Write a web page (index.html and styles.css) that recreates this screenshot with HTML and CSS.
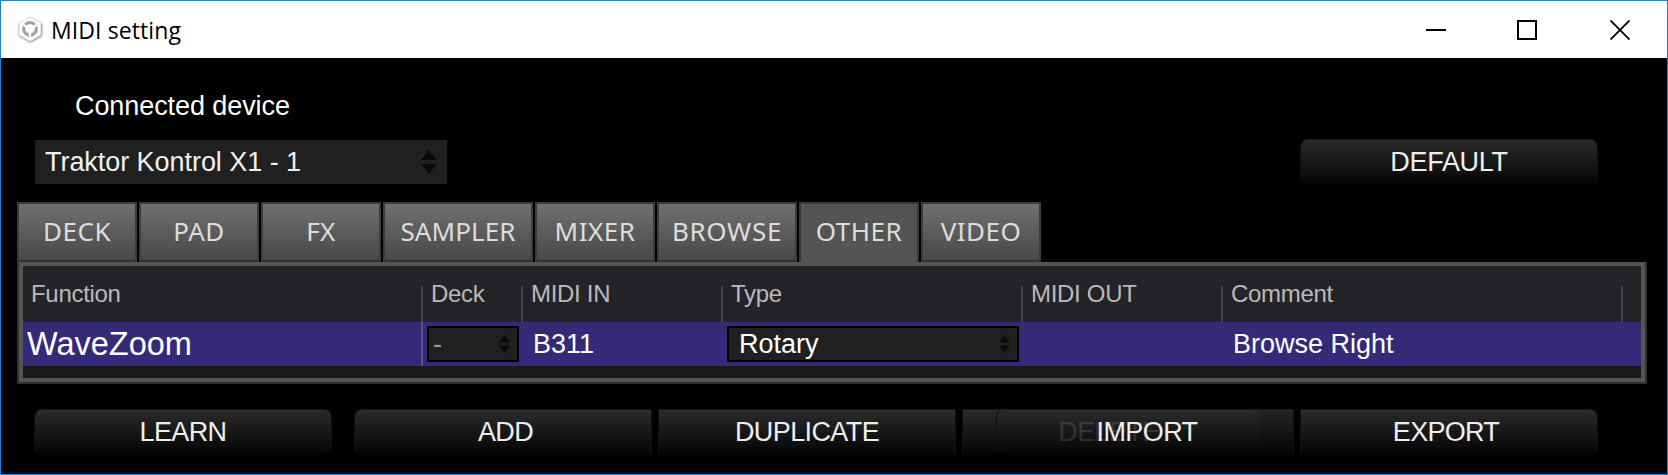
FILE: index.html
```html
<!DOCTYPE html>
<html lang="en">
<head>
<meta charset="utf-8">
<title>MIDI setting</title>
<link rel="stylesheet" href="styles.css">
</head>
<body>
<div class="window">
  <header class="titlebar">
    <svg class="app-icon" width="30" height="32" viewBox="0 0 30 32">
      <defs><filter id="soft" x="-20%" y="-20%" width="140%" height="140%"><feGaussianBlur stdDeviation="1"/></filter></defs>
      <path d="M15.500 4.500 26 10.500v11l-10.500 6L5 21.500v-11z" fill="#888" stroke="#888" stroke-width="2" stroke-linejoin="round" filter="url(#soft)"/>
      <path d="M15 3 25.500 9v12L15 27 4.500 21V9z" fill="#fff" stroke="#e6e6e6" stroke-width="1" stroke-linejoin="round"/>
      <circle cx="15" cy="15" r="6.500" fill="#ddd" stroke="#a2a2a2" stroke-width="2.800"/>
      <path d="M15 15v7.500M15 15 8.500 11M15 15l6.500-4" stroke="#fff" stroke-width="2.400"/>
      <circle cx="15" cy="14.500" r="4" fill="#fff"/>
    </svg>
    <h1 class="title">MIDI setting</h1>
    <div class="controls">
      <svg width="20" height="20" viewBox="0 0 20 20"><path d="M0 10h20" stroke="#000" stroke-width="2"/></svg>
      <svg width="20" height="20" viewBox="0 0 20 20"><path d="M1 1h18v18H1z" fill="none" stroke="#000" stroke-width="2"/></svg>
      <svg class="close" width="20" height="20" viewBox="0 0 20 20"><path d="M.500.500l19 19M19.500.500l-19 19" stroke="#000" stroke-width="1.800"/></svg>
    </div>
  </header>

  <main class="content">
    <div class="device-label">Connected device</div>
    <div class="device-row">
      <div class="select device"><span>Traktor Kontrol X1 - 1</span>
        <svg width="16" height="24" viewBox="0 0 16 24"><path d="M0 10 8 0l8 10zM0 14h16L8 24z"/></svg></div>
      <button class="btn round-left round-right default">DEFAULT</button>
    </div>

    <nav class="tabs">
      <div class="tab">DECK</div>
      <div class="tab">PAD</div>
      <div class="tab">FX</div>
      <div class="tab sampler">SAMPLER</div>
      <div class="tab">MIXER</div>
      <div class="tab browse">BROWSE</div>
      <div class="tab active">OTHER</div>
      <div class="tab">VIDEO</div>
    </nav>

    <section class="panel">
      <div class="grid head">
        <div>Function</div><div>Deck</div><div>MIDI IN</div><div>Type</div><div>MIDI OUT</div><div>Comment</div>
      </div>
      <div class="grid row">
        <div class="name">WaveZoom</div>
        <div class="cell-select"><div class="select small deck"><span>-</span>
          <svg width="11" height="18" viewBox="0 0 11 18"><path d="M0 7.500 5.500 0 11 7.500zM0 10.500h11L5.500 18z"/></svg></div></div>
        <div class="value">B311</div>
        <div class="cell-select"><div class="select small"><span>Rotary</span>
          <svg width="11" height="18" viewBox="0 0 11 18"><path d="M0 7.500 5.500 0 11 7.500zM0 10.500h11L5.500 18z"/></svg></div></div>
        <div></div>
        <div class="value">Browse Right</div>
      </div>
    </section>

    <footer class="actions">
      <button class="btn round-left round-right learn">LEARN</button>
      <button class="btn round-left add">ADD</button>
      <button class="btn">DUPLICATE</button>
      <button class="btn round-right delete">DELETE</button>
      <button class="btn round-left import">IMPORT</button>
      <button class="btn round-right export">EXPORT</button>
    </footer>
  </main>
</div>
</body>
</html>
```
FILE: styles.css
```css
* { box-sizing: border-box; }
body { margin: 0; background: #000; font-family: "Liberation Sans", Arial, sans-serif; }
.window { width: 1668px; height: 475px; border: 1px solid #1a7fd4; background: #000; overflow: hidden; }
.titlebar { display: flex; align-items: center; height: 57px; padding: 0 37px 0 14px; background: #fff; }
.app-icon { flex: none; }
.title { margin: 0 auto 0 6px; padding-top: 2px; font: 400 23px/57px "Open Sans", "Noto Sans", sans-serif; color: #000; letter-spacing: .1px; }
.controls { display: flex; gap: 71px; }
.controls svg { display: block; }
.controls .close { margin-left: 2px; }
.content { padding: 31px 20px 0 16px; }
.device-label { padding-left: 58px; height: 51px; font-size: 27px; line-height: 34px; letter-spacing: -.08px; color: #fff; }
.device-row { display: flex; justify-content: space-between; align-items: flex-start; height: 63px; padding: 0 49px 0 18px; margin-top: -1px; }

.select { display: flex; align-items: center; justify-content: space-between; background: #202020; color: #f0f0f0; font-size: 27px; }
.select svg { display: block; fill: #0b0b0b; }
.device { width: 412px; height: 44px; margin-top: 1px; padding: 0 10px; letter-spacing: -.05px; }
.small { height: 36px; padding: 0 7px 0 10px; border: 2px solid #000; color: #fff; }
.deck { padding-left: 4px; color: #999; }

.btn { width: 298px; height: 46px; padding: 1px 0 0; border: 1px solid; border-color: #1b1b1b #101010 #050505; border-radius: 0;
  background: linear-gradient(#2b2b2b, #040404) border-box; color: #eee; font: 27px/43px "Liberation Sans", Arial, sans-serif; letter-spacing: -.6px; }
.default { letter-spacing: -.3px; }
.round-left { border-top-left-radius: 8px; border-bottom-left-radius: 8px; }
.round-right { border-top-right-radius: 8px; border-bottom-right-radius: 8px; }

.tabs { display: flex; gap: 2px; height: 60px; }
.tab { width: 120px; border: 2px solid; border-color: #3c3c3c #3c3c3c #303030; background: linear-gradient(#707070, #484848);
  color: #ddd; font: 26px/54px "Noto Sans", sans-serif; letter-spacing: .5px; text-align: center; height: 60px; }
.sampler { width: 150px; letter-spacing: .1px; }
.browse { width: 140px; letter-spacing: .7px; }
.active { background: #545454; border-color: #383838; border-bottom: 0; }

.panel { width: 1630px; height: 122px; border: 2px solid #333; border-top: 0; background: #1a1a1c; box-shadow: inset 0 0 0 4px #555; padding: 4px; }
.grid { display: grid; grid-template-columns: 400px 100px 200px 300px 200px 400px; }
.head { height: 56px; background: #242328; color: #bababa; font-size: 24px; line-height: 56px; letter-spacing: -.3px; }
.head > div { padding-left: 8px; background: linear-gradient(#444, #444) right bottom / 2px 36px no-repeat; }
.row { height: 44px; grid-template-rows: 44px; background: #352a78; color: #fff; }
.name { padding-left: 4px; font-size: 32.5px; line-height: 44px; box-shadow: inset -2px 0 #5a5090; }
.value { padding-left: 10px; font-size: 27px; line-height: 45px; }
.cell-select { padding: 4px; }

.actions { display: flex; gap: 6px; padding: 25px 0 0 17px; }
.learn { margin-right: 16px; }
.add { padding-left: 5px; }
.delete { padding-right: 4px; }
.export { padding-right: 6px; letter-spacing: -.7px; }
/* IMPORT lies on top of DELETE */
.import { position: relative; flex: none; margin-left: -270px; padding-left: 4px; border-color: #1b1b1b #101010 #050505;
  background: linear-gradient(rgba(43,43,43,.87), rgba(4,4,4,.87)) border-box; }
```
